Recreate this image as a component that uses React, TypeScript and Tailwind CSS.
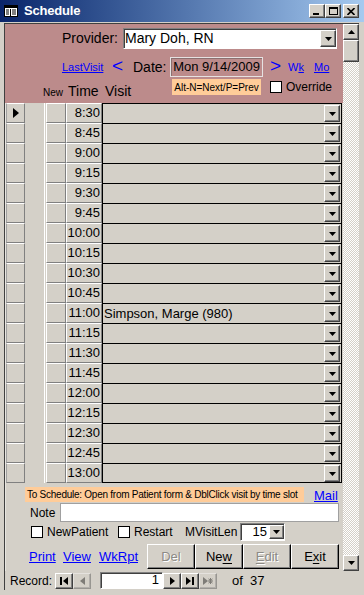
import React from 'react';

const times = [
  '8:30', '8:45', '9:00', '9:15', '9:30', '9:45', '10:00', '10:15', '10:30', '10:45',
  '11:00', '11:15', '11:30', '11:45', '12:00', '12:15', '12:30', '12:45', '13:00',
];

const raised =
  'border border-t-white border-l-white border-r-[#404040] border-b-[#404040] shadow-[inset_-1px_-1px_0_#808080]';
const sunken =
  'border border-t-[#808080] border-l-[#808080] border-r-white border-b-white shadow-[inset_1px_1px_0_#404040]';

function DownTri() {
  return (
    <svg width="7" height="4" viewBox="0 0 7 4">
      <path d="M0 0h7L3.5 4z" fill="#000" />
    </svg>
  );
}

function DropBtn({ className = '' }: { className?: string }) {
  return (
    <div className={`flex items-center justify-center bg-[#d4d0c8] ${raised} ${className}`}>
      <DownTri />
    </div>
  );
}

function Check({ className = '' }: { className?: string }) {
  return <div className={`w-[12px] h-[12px] bg-white border border-black shrink-0 ${className}`} />;
}

function TitleBar() {
  return (
    <div className="h-[22px] flex items-center bg-gradient-to-r from-[#0a246a] to-[#a6caf0] shrink-0">
      <svg width="14" height="12" viewBox="0 0 14 12" className="ml-[4px]">
        <rect x="0.5" y="0.5" width="13" height="11" fill="#fff" stroke="#000" />
        <rect x="1" y="1" width="12" height="2" fill="#000" />
        <path d="M2 5h3M2 7h3M2 9h3M8 5h4M8 7h4M8 9h4" stroke="#000" />
        <path d="M6.5 4v7" stroke="#000" />
      </svg>
      <span className="ml-[6px] text-white font-bold text-[13px] tracking-[-0.2px]">Schedule</span>
      <div className="flex-1" />
      <div className={`w-[16px] h-[14px] bg-[#d4d0c8] ${raised} flex items-end justify-center pb-[2px]`}>
        <div className="w-[6px] h-[2px] bg-black ml-[-2px]" />
      </div>
      <div className={`w-[16px] h-[14px] bg-[#d4d0c8] ${raised} flex items-center justify-center`}>
        <div className="w-[9px] h-[8px] border border-black border-t-2" />
      </div>
      <div className={`w-[16px] h-[14px] ml-[2px] mr-[5px] bg-[#d4d0c8] ${raised} flex items-center justify-center`}>
        <svg width="8" height="7" viewBox="0 0 8 7">
          <path d="M0.5 0l7 7M7.5 0l-7 7" stroke="#000" strokeWidth="1.6" />
        </svg>
      </div>
    </div>
  );
}

function GridRow({ time, visit, current, last }: { time: string; visit?: string; current?: boolean; last?: boolean }) {
  return (
    <div className="flex h-[20px] shrink-0">
      <div className="w-[1px] bg-[#e8e6e0]" />
      <div className="w-[19px] border border-t-white border-l-[#a0a0a0] border-r-[#808080] border-b-[#808080] flex items-center justify-center">
        {current && (
          <svg width="6" height="10" viewBox="0 0 6 10">
            <path d="M0 0l6 5-6 5z" fill="#000" />
          </svg>
        )}
      </div>
      <div className="w-[19px]" />
      <div className="w-[1px] bg-white" />
      <div className="w-[1px]" />
      <div className="w-[20px] border border-t-white border-l-white border-r-[#808080] border-b-[#808080]" />
      <div className="w-[36px] border border-t-white border-l-white border-r-[#808080] border-b-[#808080] text-[13px] text-right pr-[1px] leading-[18px]">
        {time}
      </div>
      <div
        className={`w-[240px] border-l border-t border-r border-black ${last ? 'border-b' : ''} flex items-start pt-[1px] pr-[1px]`}
      >
        <div className="flex-1 text-[13px] leading-[17px] pl-[1px] whitespace-nowrap overflow-hidden">{visit}</div>
        <DropBtn className="w-[16px] h-[17px]" />
      </div>
    </div>
  );
}

function NavBtn({ children, disabled }: { children: React.ReactNode; disabled?: boolean }) {
  return (
    <div className={`w-[18px] h-[16px] ${raised} bg-[#d4d0c8] flex items-center justify-center ${disabled ? 'opacity-40' : ''}`}>
      {children}
    </div>
  );
}

function Btn({ label, u, disabled }: { label: string; u?: number; disabled?: boolean }) {
  const parts =
    u === undefined ? [label] : [label.slice(0, u), label.slice(u, u + 1), label.slice(u + 1)];
  return (
    <div
      className={`w-[48px] h-[25px] bg-[#d4d0c8] border border-t-white border-l-white border-r-black border-b-black shadow-[inset_-1px_-1px_0_#808080] flex items-center justify-center text-[13px] ${
        disabled ? 'text-[#8c8a85] [text-shadow:1px_1px_0_#fff]' : 'text-black'
      }`}
    >
      {u === undefined ? (
        label
      ) : (
        <span>
          {parts[0]}
          <span className="underline underline-offset-2">{parts[1]}</span>
          {parts[2]}
        </span>
      )}
    </div>
  );
}

export default function App() {
  return (
    <div className="w-[364px] h-[595px] bg-[#d4d0c8] flex flex-col overflow-hidden font-['Liberation_Sans',Arial,sans-serif] text-black select-none">
      <TitleBar />
      <div className="h-[1px]" />
      <div className="flex flex-1 min-h-0 pl-[4px] pr-[5px]">
        <div className="flex-1 flex flex-col border-l border-t border-[#404040]">
          <div className="flex h-[547px] shrink-0">
            {/* form */}
            <div className="w-[338px] flex flex-col">
              {/* header */}
              <div className="h-[79px] bg-[#bc8b8b] flex flex-col shrink-0">
                <div className="mt-[4px] h-[21px] flex items-center">
                  <div className="w-[113px] text-right text-[14px]">Provider:</div>
                  <div className={`ml-[5px] w-[214px] h-[21px] bg-white ${sunken} flex items-center`}>
                    <div className="flex-1 text-[14px] pl-[1px] leading-[17px]">Mary Doh, RN</div>
                    <DropBtn className="w-[16px] h-[17px] mr-[0px]" />
                  </div>
                </div>
                <div className="mt-[8px] h-[20px] flex items-center">
                  <div className="w-[57px]" />
                  <div className="w-[50px] text-[11px] text-[#0000ff] underline">LastVisit</div>
                  <div className="w-[21px] text-[19px] text-[#0000ff] leading-[20px] mt-[-2px]">&lt;</div>
                  <div className="w-[37px] text-[14px]">Date:</div>
                  <div className="w-[93px] h-[20px] border border-[#e6e2e2] shadow-[inset_1px_1px_0_#8a7070] flex items-center justify-center text-[13px] whitespace-nowrap">
                    Mon 9/14/2009
                  </div>
                  <div className="w-[7px]" />
                  <div className="w-[18px] text-[19px] text-[#0000ff] leading-[20px] mt-[-2px]">&gt;</div>
                  <div className="w-[26px] text-[11px] text-[#0000ff]">
                    W<span className="underline">k</span>
                  </div>
                  <div className="text-[11px] text-[#0000ff] underline">Mo</div>
                </div>
                <div className="mt-[2px] h-[24px] flex">
                  <div className="w-[167px] flex items-end pb-[4px]">
                    <div className="w-[38px]" />
                    <div className="w-[25px] text-[10px] leading-[12px]">New</div>
                    <div className="w-[37px] text-[14px] leading-[15px]">Time</div>
                    <div className="text-[14px] leading-[15px]">Visit</div>
                  </div>
                  <div className="w-[89px] h-[16px] bg-[#ffcc99] text-[10px] flex items-center justify-center whitespace-nowrap">
                    Alt-N=Next/P=Prev
                  </div>
                  <div className="w-[9px]" />
                  <Check className="mt-[2px]" />
                  <div className="ml-[4px] text-[12px] leading-[16px]">Override</div>
                </div>
              </div>

              {/* grid */}
              <div className="flex flex-col shrink-0">
                {times.map((t, i) => (
                  <GridRow
                    key={t}
                    time={t}
                    current={i === 0}
                    last={i === times.length - 1}
                    visit={t === '11:00' ? 'Simpson, Marge (980)' : undefined}
                  />
                ))}
              </div>

              {/* footer */}
              <div className="flex flex-col flex-1 border-l border-[#e8e6e0]">
                <div className="mt-[4px] h-[15px] flex items-center">
                  <div className="w-[19px]" />
                  <div className="w-[279px] h-[15px] bg-[#ffcc99] text-[10px] tracking-[-0.25px] leading-[15px] pl-[2px] whitespace-nowrap overflow-hidden">
                    To Schedule: Open from Patient form &amp; DblClick visit by time slot
                  </div>
                  <div className="w-[10px]" />
                  <div className="text-[13px] text-[#0000ff] underline mt-[3px]">Mail</div>
                </div>
                <div className="mt-[1px] h-[19px] flex items-center">
                  <div className="w-[24px]" />
                  <div className="w-[30px] text-[12px]">Note</div>
                  <div className="w-[279px] h-[19px] bg-white border border-[#a0a0a0]" />
                </div>
                <div className="mt-[1px] h-[18px] flex items-center">
                  <div className="w-[25px]" />
                  <Check />
                  <div className="w-[75px] pl-[4px] text-[12px]">NewPatient</div>
                  <Check />
                  <div className="w-[55px] pl-[4px] text-[12px]">Restart</div>
                  <div className="w-[55px] text-[12px]">MVisitLen</div>
                  <div className={`w-[45px] h-[18px] bg-white ${sunken} flex items-center`}>
                    <div className="flex-1 text-right text-[13px] pr-[2px] leading-[14px]">15</div>
                    <DropBtn className="w-[15px] h-[14px]" />
                  </div>
                </div>
                <div className="mt-[3px] h-[25px] flex items-center">
                  <div className="w-[23px]" />
                  <div className="w-[34px] text-[13px] text-[#0000ff] underline">Print</div>
                  <div className="w-[36px] text-[13px] text-[#0000ff] underline">View</div>
                  <div className="w-[48px] text-[13px] text-[#0000ff] underline">WkRpt</div>
                  <Btn label="Del" disabled />
                  <Btn label="New" u={2} />
                  <Btn label="Edit" u={0} disabled />
                  <Btn label="Exit" u={1} />
                </div>
              </div>
            </div>

            {/* vertical scrollbar */}
            <div className="w-[16px] flex flex-col">
              <DropBtnUp />
              <div className={`h-[22px] bg-[#d4d0c8] ${raised}`} />
              <div className="flex-1 bg-[repeating-conic-gradient(#ffffff_0_25%,#d4d0c8_0_50%)] bg-[length:2px_2px]" />
              <div className={`h-[16px] bg-[#d4d0c8] ${raised} flex items-center justify-center`}>
                <DownTri />
              </div>
            </div>
          </div>

          {/* record navigation */}
          <div className="h-[19px] flex items-center">
            <div className="w-[5px]" />
            <div className="w-[45px] text-[12px]">Record:</div>
            <NavBtn>
              <svg width="8" height="8" viewBox="0 0 8 8">
                <path d="M0 0h2v8H0zM8 0v8L3 4z" fill="#000" />
              </svg>
            </NavBtn>
            <NavBtn disabled>
              <svg width="5" height="8" viewBox="0 0 5 8">
                <path d="M5 0v8L0 4z" fill="#000" />
              </svg>
            </NavBtn>
            <div className="w-[9px]" />
            <div className={`w-[63px] h-[17px] bg-white ${sunken} text-[13px] text-right pr-[3px] leading-[14px]`}>1</div>
            <NavBtn>
              <svg width="5" height="8" viewBox="0 0 5 8">
                <path d="M0 0v8l5-4z" fill="#000" />
              </svg>
            </NavBtn>
            <NavBtn>
              <svg width="8" height="8" viewBox="0 0 8 8">
                <path d="M0 0v8l5-4zM6 0h2v8H6z" fill="#000" />
              </svg>
            </NavBtn>
            <NavBtn disabled>
              <svg width="10" height="8" viewBox="0 0 10 8">
                <path d="M0 0v8l5-4z" fill="#000" />
                <path d="M7.5 1v6M5 4h5M5.7 1.7l3.6 4.6M9.3 1.7l-3.6 4.6" stroke="#000" strokeWidth="1" />
              </svg>
            </NavBtn>
            <div className="w-[15px]" />
            <div className="text-[13px]">of&nbsp;&nbsp;37</div>
          </div>
        </div>
      </div>
      <div className="h-[5px]" />
    </div>
  );
}

function DropBtnUp() {
  return (
    <div className={`h-[16px] bg-[#d4d0c8] ${raised} flex items-center justify-center`}>
      <svg width="7" height="4" viewBox="0 0 7 4">
        <path d="M0 4h7L3.5 0z" fill="#000" />
      </svg>
    </div>
  );
}
